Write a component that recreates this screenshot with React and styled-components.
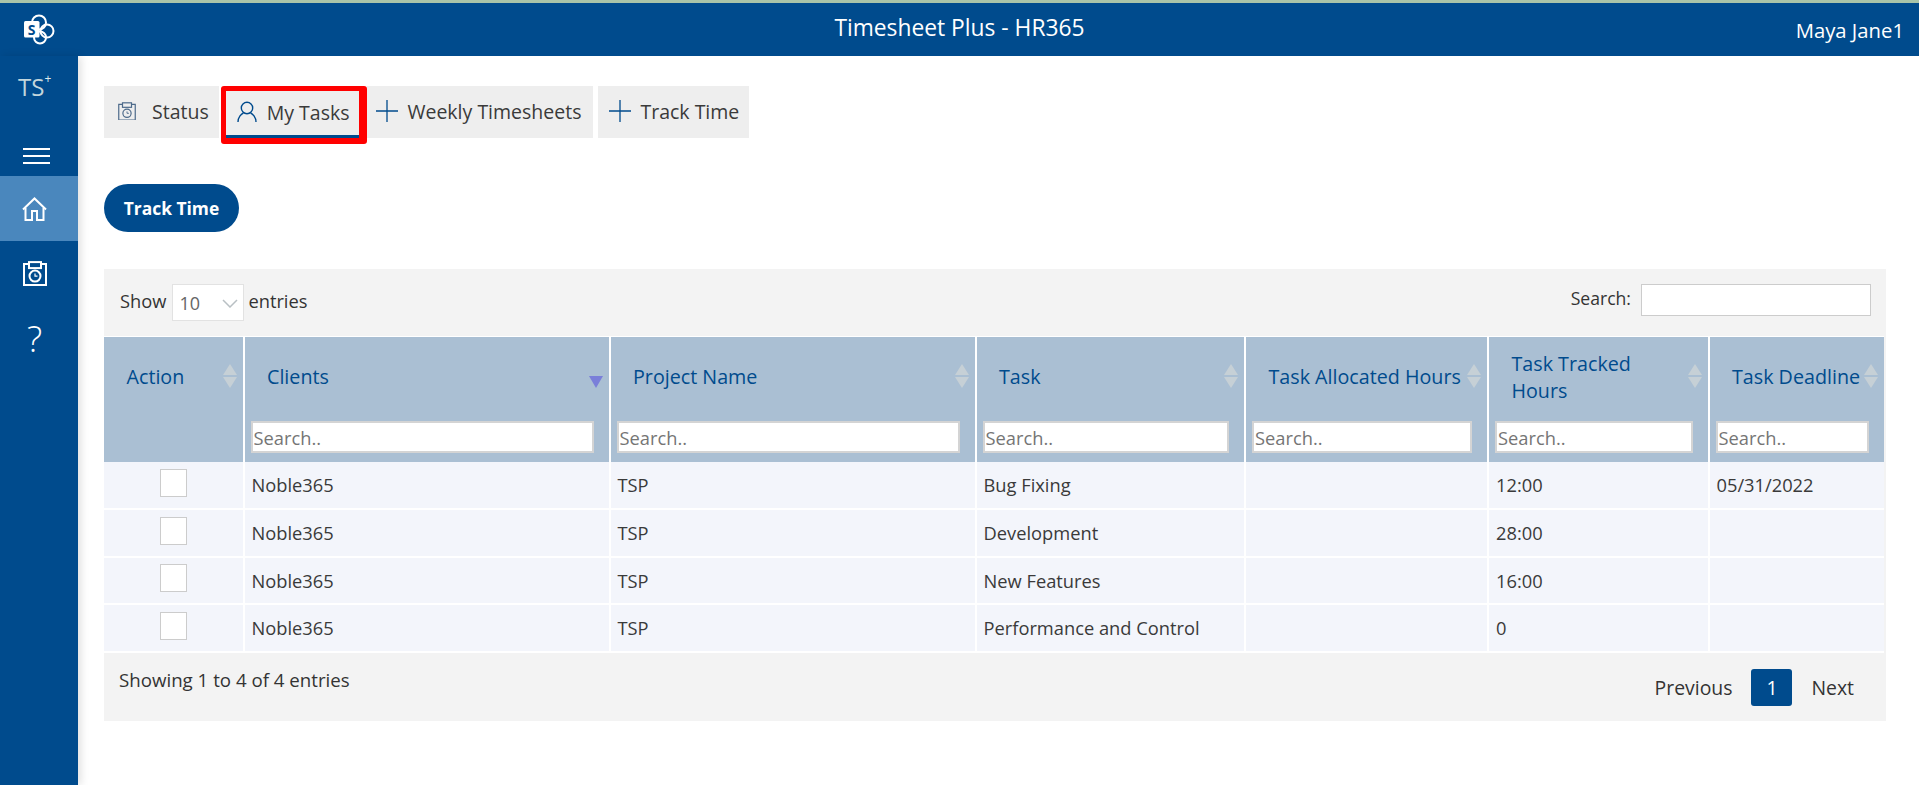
import React from 'react'
import styled, { createGlobalStyle } from 'styled-components'

const blue = '#004b8d'

const GlobalStyle = createGlobalStyle`
  html, body { margin: 0; padding: 0; background: #fff; }
  body { font-family: 'Open Sans', 'Noto Sans', sans-serif; color: #333; }
  * { box-sizing: border-box; }
`

const columns = [
  { title: 'Action', width: 139.5 },
  { title: 'Clients', width: 366, search: true, sorted: true },
  { title: 'Project Name', width: 366, search: true },
  { title: 'Task', width: 269.5, search: true },
  { title: 'Task Allocated Hours', width: 243, search: true },
  { title: 'Task Tracked Hours', width: 220.5, search: true, titleWidth: 150 },
  { title: 'Task Deadline', width: 175.5, search: true },
]

const rows = [
  ['Noble365', 'TSP', 'Bug Fixing', '', '12:00', '05/31/2022'],
  ['Noble365', 'TSP', 'Development', '', '28:00', ''],
  ['Noble365', 'TSP', 'New Features', '', '16:00', ''],
  ['Noble365', 'TSP', 'Performance and Control', '', '0', ''],
]

const Page = styled.div`
  width: 1919px;
  height: 785px;
  overflow: hidden;
  display: flex;
  flex-direction: column;
  border-top: 3px solid #a9c4a9;
`

const TopBar = styled.header`
  height: 53px;
  flex-shrink: 0;
  background: ${blue};
  color: #fff;
  display: grid;
  grid-template-columns: 1fr auto 1fr;
  align-items: center;
  padding-right: 15px;
`

const LogoBox = styled.div`
  display: flex;
  padding-left: 24px;
`

const AppTitle = styled.div`
  font-size: 22.8px;
  margin-top: -5px;
  padding-left: 15px;
`

const UserName = styled.div`
  font-size: 20.3px;
  margin-top: 1px;
  text-align: right;
`

const Body = styled.div`
  flex: 1;
  display: flex;
  min-height: 0;
`

const Sidebar = styled.nav`
  width: 78px;
  flex-shrink: 0;
  background: ${blue};
  color: #fff;
  display: flex;
  flex-direction: column;
  box-shadow: 3px 0 8px rgba(0, 0, 0, 0.12);
  z-index: 1;
`

const Brand = styled.div`
  height: 63px;
  padding: 16px 0 0 18px;
  font-size: 24px;
  line-height: 30px;
  color: #c3d6dc;
  sup {
    font-size: 12px;
    line-height: 0;
    vertical-align: 13px;
    color: #dfe9ec;
  }
`

const MenuButton = styled.div`
  height: 57px;
  display: flex;
  justify-content: center;
  padding: 29px 6px 0 0;
`

const NavItem = styled.div`
  height: 65px;
  display: flex;
  align-items: center;
  justify-content: center;
  padding-right: 9px;
  background: ${(p) => (p.$active ? '#4a87bd' : 'transparent')};
`

const HelpMark = styled.span`
  font-size: 36px;
  font-weight: 300;
  line-height: 1;
`

const Main = styled.main`
  flex: 1;
  padding: 30px 33px 0 26px;
  min-width: 0;
`

const Tabs = styled.div`
  display: flex;
  align-items: flex-start;
  height: 58px;
`

const Tab = styled.div`
  height: 52px;
  background: #eeeeee;
  display: flex;
  align-items: center;
  gap: ${(p) => p.$gap || 9}px;
  padding: 0 ${(p) => p.$right || 10}px 2px ${(p) => p.$left || 10}px;
  margin-right: ${(p) => p.$after || 0}px;
  font-size: 19.5px;
  color: #3a3a3a;
  white-space: nowrap;
`

const ActiveTab = styled(Tab)`
  position: relative;
  height: 58px;
  margin-left: 2px;
  padding: 0 10px 5px 11px;
  gap: 10px;
  border: 5px solid #ff0000;
  border-right-width: 8px;
  border-bottom-width: 6px;
  border-radius: 3px;
  &::after {
    content: '';
    position: absolute;
    left: 0;
    right: 0;
    bottom: 0;
    height: 3px;
    background: ${blue};
  }
`

const TrackButton = styled.button`
  display: block;
  margin: 40px 0 37px;
  width: 135px;
  height: 48px;
  border: 0;
  border-radius: 24px;
  background: ${blue};
  color: #fff;
  font-family: inherit;
  font-size: 17.4px;
  font-weight: 700;
  padding: 0;
`

const Panel = styled.section`
  width: 1782px;
  background: #f3f3f3;
`

const PanelTop = styled.div`
  height: 67px;
  display: flex;
  justify-content: space-between;
  padding: 15px 15px 0 16px;
  font-size: 18.3px;
`

const LengthControl = styled.label`
  display: flex;
  align-items: flex-start;
  gap: 6px;
  line-height: 33px;
`

const LengthBox = styled.div`
  width: 72px;
  height: 37px;
  margin-right: -2px;
  background: #fff;
  border: 1px solid #e2e2e2;
  display: flex;
  align-items: center;
  justify-content: space-between;
  padding: 2px 5px 0 6px;
  color: #666;
  font-size: 18px;
`

const SearchControl = styled.label`
  display: flex;
  align-items: flex-start;
  gap: 10px;
  line-height: 28px;
  font-size: 17.6px;
`

const SearchBox = styled.input`
  width: 230px;
  height: 32px;
  background: #fff;
  border: 1px solid #cccccc;
`

const Table = styled.table`
  width: 1780px;
  table-layout: fixed;
  border-collapse: collapse;
  font-size: 18.3px;
`

const HeadCell = styled.th`
  height: 125px;
  padding: 0;
  background: #aabfd3;
  border-left: 2px solid #fff;
  border-top: 1px solid #fff;
  font-weight: 400;
  text-align: left;
  vertical-align: top;
  &:first-child { border-left: 0; }
`

const HeadRow = styled.div`
  height: 84px;
  padding: 0 6px 5px 22.5px;
  display: flex;
  align-items: center;
  justify-content: space-between;
  color: ${blue};
  font-size: 19.7px;
  line-height: 27px;
`

const HeadTitle = styled.span`
  max-width: ${(p) => (p.$max ? `${p.$max}px` : 'none')};
  white-space: ${(p) => (p.$max ? 'normal' : 'nowrap')};
`

const Sort = styled.span`
  flex-shrink: 0;
  width: 14px;
  display: flex;
  flex-direction: column;
  gap: 2px;
  align-self: center;
  margin-top: ${(p) => (p.$sorted ? '8px' : '-1px')};
  &::before, &::after {
    content: '';
    display: block;
    border-left: 7px solid transparent;
    border-right: 7px solid transparent;
  }
  &::before {
    border-bottom: ${(p) => (p.$sorted ? '0' : '11px solid #c6d0d6')};
  }
  &::after {
    border-top: ${(p) => (p.$sorted ? '12px solid #7a7fd9' : '11px solid #c6d0d6')};
  }
`

const ColumnSearch = styled.input`
  display: block;
  height: 32px;
  width: calc(100% - 21px);
  margin-left: 6px;
  padding: 0 1px;
  border: 2px solid #d4d4d4;
  background: #fff;
  font-family: inherit;
  font-size: 18.3px;
  &::placeholder { color: #757575; opacity: 1; }
`

const Row = styled.tr`
  height: 47.5px;
`

const Cell = styled.td`
  background: #f3f5fb;
  border-left: 2px solid #fff;
  border-bottom: 2px solid #fff;
  padding: 0 0 0 7px;
  color: #3a3a3a;
  &:first-child { border-left: 0; padding: 0; }
`

const Check = styled.div`
  width: 27px;
  height: 28px;
  margin: 0 0 4px 56px;
  background: #fff;
  border: 1px solid #cccccc;
`

const PanelFoot = styled.div`
  height: 68px;
  display: flex;
  justify-content: space-between;
  padding: 12px 32px 0 15px;
  font-size: 18.7px;
  line-height: 30px;
`

const Pager = styled.div`
  display: flex;
  align-items: flex-start;
  gap: 19px;
  font-size: 19.4px;
  line-height: 37px;
  margin-top: 4px;
`

const PageNumber = styled.div`
  width: 41px;
  height: 37px;
  background: ${blue};
  border-radius: 3px;
  color: #fff;
  text-align: center;
`

const SharePointLogo = () => (
  <svg width="32" height="32" viewBox="0 0 32 32" fill="none">
    <circle cx="15" cy="8.5" r="7" stroke="#fff" strokeWidth="2" />
    <circle cx="23" cy="17" r="6.5" stroke="#fff" strokeWidth="2" />
    <circle cx="16" cy="23.5" r="6" stroke="#fff" strokeWidth="2" />
    <rect x="0" y="7" width="15.5" height="16.5" rx="1.5" fill="#fff" />
    <text x="7.7" y="20.5" textAnchor="middle" fontSize="14" fontWeight="700" fontFamily="'Open Sans', sans-serif" fill={blue}>S</text>
  </svg>
)

const Hamburger = () => (
  <svg width="27" height="16" viewBox="0 0 27 16">
    <path d="M0 1h27M0 8h27M0 15h27" stroke="#fff" strokeWidth="2" />
  </svg>
)

const HomeIcon = () => (
  <svg width="25" height="24" viewBox="0 0 25 24" fill="none" stroke="#fff" strokeWidth="2">
    <path d="M1 12.5 12.5 1.5 24 12.5" />
    <path d="M3.5 11v12H10v-9h5v9h6.5V11" />
  </svg>
)

const SaveClock = ({ size = 24, color = '#fff', width = 2 }) => (
  <svg width={size} height={size * 1.05} viewBox="0 0 24 25" fill="none" stroke={color} strokeWidth={width}>
    <path d="M6 3H1v21h22V3h-5" />
    <rect x="6" y="1" width="12" height="6" />
    <circle cx="12" cy="15" r="5.5" />
    <path d="M12 12.5V15h2.5" strokeWidth="1.2" />
  </svg>
)

const UserIcon = () => (
  <svg width="20" height="22" viewBox="0 0 20 22" fill="none" stroke={blue} strokeWidth="1.4">
    <circle cx="10" cy="7" r="5.7" />
    <path d="M1 21c0-5 3.5-8.3 5.5-9M19 21c0-5-3.5-8.3-5.5-9" />
  </svg>
)

const PlusIcon = () => (
  <svg width="22" height="22" viewBox="0 0 22 22" stroke={blue} strokeWidth="1.3">
    <path d="M0 11h22M11 0v22" />
  </svg>
)

const Chevron = () => (
  <svg width="16" height="9" viewBox="0 0 16 9" fill="none" stroke="#b9c0c4" strokeWidth="1.5">
    <path d="M1 1l7 7 7-7" />
  </svg>
)

const App = () => (
  <>
    <GlobalStyle />
    <Page>
      <TopBar>
        <LogoBox><SharePointLogo /></LogoBox>
        <AppTitle>Timesheet Plus - HR365</AppTitle>
        <UserName>Maya Jane1</UserName>
      </TopBar>
      <Body>
        <Sidebar>
          <Brand>TS<sup>+</sup></Brand>
          <MenuButton><Hamburger /></MenuButton>
          <NavItem $active><HomeIcon /></NavItem>
          <NavItem><SaveClock /></NavItem>
          <NavItem><HelpMark>?</HelpMark></NavItem>
        </Sidebar>
        <Main>
          <Tabs>
            <Tab $left={14} $gap={16}><SaveClock size={18} color="#4d6a8a" width={1.6} />Status</Tab>
            <ActiveTab><UserIcon />My Tasks</ActiveTab>
            <Tab $left={9} $right={12} $after={5}><PlusIcon />Weekly Timesheets</Tab>
            <Tab $left={11}><PlusIcon />Track Time</Tab>
          </Tabs>
          <TrackButton>Track Time</TrackButton>
          <Panel>
            <PanelTop>
              <LengthControl>
                Show
                <LengthBox>10<Chevron /></LengthBox>
                entries
              </LengthControl>
              <SearchControl>
                Search:
                <SearchBox />
              </SearchControl>
            </PanelTop>
            <Table>
              <colgroup>
                {columns.map((col) => <col key={col.title} style={{ width: col.width }} />)}
              </colgroup>
              <thead>
                <tr>
                  {columns.map((col) => (
                    <HeadCell key={col.title}>
                      <HeadRow>
                        <HeadTitle $max={col.titleWidth}>{col.title}</HeadTitle>
                        <Sort $sorted={col.sorted} />
                      </HeadRow>
                      {col.search && <ColumnSearch placeholder="Search.." />}
                    </HeadCell>
                  ))}
                </tr>
              </thead>
              <tbody>
                {rows.map((row, i) => (
                  <Row key={i}>
                    <Cell><Check /></Cell>
                    {row.map((value, j) => <Cell key={j}>{value}</Cell>)}
                  </Row>
                ))}
              </tbody>
            </Table>
            <PanelFoot>
              <span>Showing 1 to 4 of 4 entries</span>
              <Pager>
                <span>Previous</span>
                <PageNumber>1</PageNumber>
                <span>Next</span>
              </Pager>
            </PanelFoot>
          </Panel>
        </Main>
      </Body>
    </Page>
  </>
)

export default App
